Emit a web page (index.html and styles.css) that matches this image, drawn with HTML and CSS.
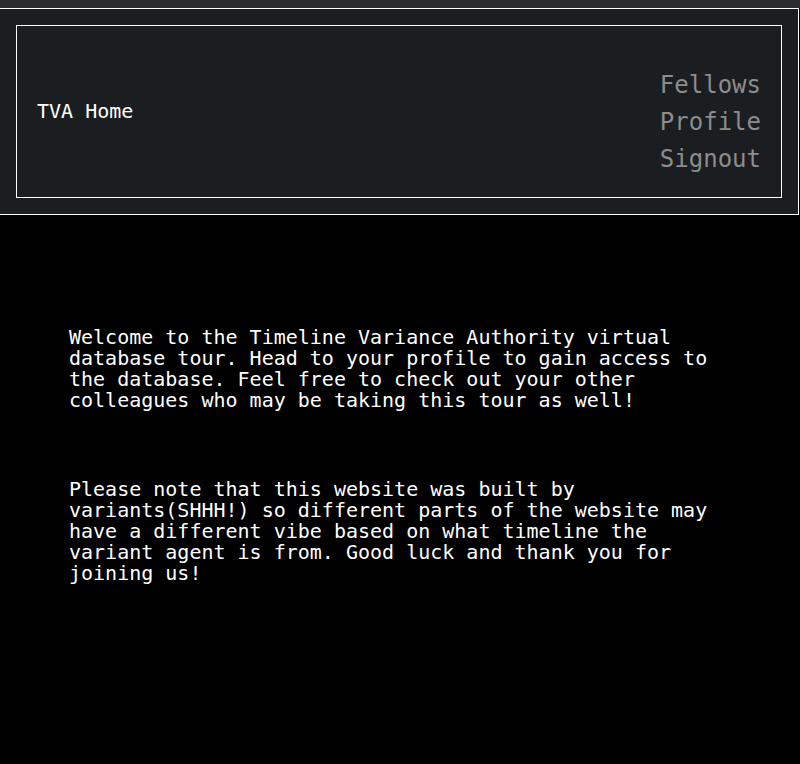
FILE: index.html
```html
<!DOCTYPE html>
<html lang="en">
<head>
<meta charset="utf-8">
<title>TVA</title>
<link rel="stylesheet" href="styles.css">
</head>
<body>
<div class="topstrip"></div>
<header class="header">
  <nav class="navbox">
    <a class="brand" href="#">TVA Home</a>
    <div class="links">
      <a class="link" href="#">Fellows</a>
      <a class="link" href="#">Profile</a>
      <a class="link" href="#">Signout</a>
    </div>
  </nav>
</header>
<main class="main">
  <p class="para">Welcome to the Timeline Variance Authority virtual database tour. Head to your profile to gain access to the database. Feel free to check out your other colleagues who may be taking this tour as well!</p>
  <p class="para">Please note that this website was built by variants(SHHH!) so different parts of the website may have a different vibe based on what timeline the variant agent is from. Good luck and thank you for joining us!</p>
</main>
</body>
</html>
```
FILE: styles.css
```css
html, body {
  margin: 0;
  padding: 0;
  background: #000;
  font-family: "DejaVu Sans Mono", monospace;
  overflow: hidden;
}
.topstrip {
  height: 8px;
  background: #2a2c30;
}
.header {
  margin-left: -1px;
  width: 800px;
  border: 1px solid #fff;
  background: #1b1e21;
  padding: 16px;
  box-sizing: border-box;
}
.navbox {
  display: flex;
  align-items: center;
  justify-content: space-between;
  border: 1px solid #fff;
  height: 173px;
  box-sizing: border-box;
  padding: 0 20px;
}
.brand {
  color: #fff;
  text-decoration: none;
  font-size: 20px;
  padding-bottom: 2px;
}
.links {
  display: flex;
  flex-direction: column;
  align-items: flex-end;
  padding-top: 22px;
}
.link {
  color: #8c8c8c;
  text-decoration: none;
  font-size: 24px;
  line-height: 37px;
}
.main {
  padding: 112px 69px 0 69px;
  width: 662px;
}
.para {
  margin: 0 0 68px 0;
  color: #fff;
  font-size: 20px;
  line-height: 21px;
}
```
